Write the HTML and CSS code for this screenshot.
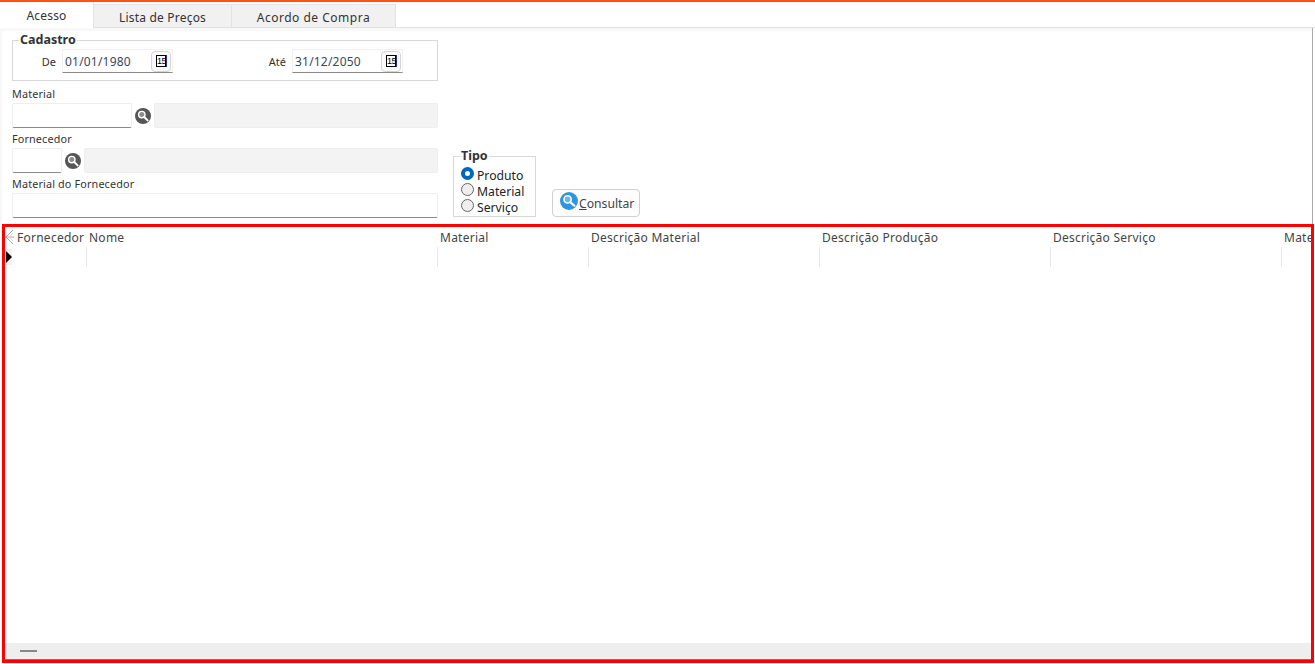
FILE: index.html
```html
<!DOCTYPE html>
<html lang="pt-BR">

<head>
  <meta charset="UTF-8">
  <meta name="viewport" content="width=device-width, initial-scale=1.0">
  <title>Acesso</title>
  <link rel="stylesheet" href="styles.css">
</head>
<body>
  <!-- Tabs -->
  <div class="tabs">
    <div class="tab active">Acesso</div>
    <div class="tab tab-price">Lista de Preços</div>
    <div class="tab tab-buy">Acordo de Compra</div>
  </div>

  <!-- Filters -->
  <div class="panel">
    <div class="filters">
      <div class="filters-left">
        <fieldset class="group cadastro">
          <legend>Cadastro</legend>
          <span class="date-label label-de">De</span>
          <div class="date-input"><span>01/01/1980</span><button class="cal"><b>15</b></button></div>
          <span class="date-label label-ate">Até</span>
          <div class="date-input"><span>31/12/2050</span><button class="cal"><b>15</b></button></div>
        </fieldset>

        <label class="field-label label-material">Material</label>
        <div class="lookup">
          <div class="input input-material"></div>
          <svg class="search" viewBox="0 0 16 16"><circle cx="8" cy="8" r="8" fill="#565656"/><circle cx="6.8" cy="6.6" r="3.2" fill="#8c8c8c" stroke="#fff" stroke-width="1.4"/><path d="M9.2 9l3.4 3.4" stroke="#fff" stroke-width="2" stroke-linecap="round"/></svg>
          <div class="input readonly"></div>
        </div>

        <label class="field-label">Fornecedor</label>
        <div class="lookup">
          <div class="input input-fornecedor"></div>
          <svg class="search" viewBox="0 0 16 16"><circle cx="8" cy="8" r="8" fill="#565656"/><circle cx="6.8" cy="6.6" r="3.2" fill="#8c8c8c" stroke="#fff" stroke-width="1.4"/><path d="M9.2 9l3.4 3.4" stroke="#fff" stroke-width="2" stroke-linecap="round"/></svg>
          <div class="input readonly"></div>
        </div>

        <label class="field-label">Material do Fornecedor</label>
        <div class="input input-full"></div>
      </div>

      <fieldset class="group tipo">
        <legend>Tipo</legend>
        <div class="radio"><span class="dot checked"></span>Produto</div>
        <div class="radio"><span class="dot"></span>Material</div>
        <div class="radio"><span class="dot"></span>Serviço</div>
      </fieldset>

      <button class="consultar">
        <svg viewBox="0 0 18 18"><circle cx="9" cy="9" r="9" fill="#2f95dc"/><circle cx="7.6" cy="7.4" r="3.6" fill="#6db6e8" stroke="#fff" stroke-width="1.6"/><path d="M10.4 10.2l4 3.6" stroke="#fff" stroke-width="2.2" stroke-linecap="round"/></svg>
        <span><u>C</u>onsultar</span>
      </button>
    </div>
  </div>

  <!-- Grid -->
  <div class="grid-frame">
    <div class="grid-body">
      <div class="grid-row grid-head">
        <div class="marker">
          <svg viewBox="0 0 9 16" width="9" height="16"><path d="M8 1L1 8L8 15M0 8H9" fill="none" stroke="#aaa" stroke-width="1"/><path d="M8 4L4 8L8 12" fill="none" stroke="#ddd" stroke-width="1"/></svg>
        </div>
        <div class="col">Fornecedor</div>
        <div class="col">Nome</div>
        <div class="col">Material</div>
        <div class="col">Descrição Material</div>
        <div class="col">Descrição Produção</div>
        <div class="col">Descrição Serviço</div>
        <div class="col">Material</div>
      </div>
      <div class="grid-row grid-filter">
        <div class="marker"><span class="arrow"></span></div>
        <div class="col"></div>
        <div class="col"></div>
        <div class="col"></div>
        <div class="col"></div>
        <div class="col"></div>
        <div class="col"></div>
        <div class="col"></div>
      </div>
    </div>
    <div class="scrollbar"><span class="thumb"></span></div>
  </div>
</body>

</html>
```
FILE: styles.css
```css
body {
  margin: 0;
  padding: 0;
  background: #fff;
  color: #333;
  font-family: "Noto Sans", "Open Sans", sans-serif;
  font-size: 12px;
  overflow: hidden;
}

/* Tabs */
.tabs {
  display: flex;
  height: 25px;
  border-top: 2px solid #ff5210;
  border-bottom: 1px solid #e1e1e1;
}

.tab {
  margin-top: 2px;
  box-sizing: border-box;
  background: #f1f1f1;
  border: 1px solid #e4e4e4;
  border-bottom: none;
  text-align: center;
  line-height: 25px;
  font-size: 12px;
  letter-spacing: 0.2px;
}

.tab.active {
  width: 94px;
  margin-top: 0;
  margin-bottom: -1px;
  background: #fff;
  border: none;
  border-right: 1px solid #e4e4e4;
  line-height: 27px;
}

.tab-price {
  width: 138px;
  border-left: none;
}

.tab-buy {
  width: 164px;
  border-left: none;
  letter-spacing: 0.5px;
}

/* Filter panel */
.panel {
  height: 196px;
  margin-right: 2px;
  padding: 3px 0 0 10px;
  box-sizing: border-box;
  background: linear-gradient(#f8f8f8 0, #f8f8f8 3px, #fff 3px);
  border-left: 2px solid #f8f8f8;
  border-right: 1px solid #aaa;
}

.filters {
  display: flex;
  align-items: flex-end;
  height: 187px;
}

.filters-left {
  width: 426px;
}

.group {
  margin: 0;
  padding: 0;
  border: 1px solid #d8d8d8;
  box-sizing: border-box;
}

.group legend {
  margin-left: 6px;
  padding: 0 1px;
  font-size: 12.5px;
  font-weight: 700;
  line-height: 12px;
}

.cadastro {
  display: flex;
  align-items: center;
  height: 47px;
  padding-bottom: 4px;
}

.date-label {
  font-size: 11px;
  text-align: right;
}

.label-de {
  width: 43px;
  margin-right: 6px;
}

.label-ate {
  width: 113px;
  margin-right: 6px;
}

.date-input {
  display: flex;
  justify-content: space-between;
  align-items: center;
  width: 111px;
  height: 24px;
  padding: 0 1px 0 2px;
  box-sizing: border-box;
  border: 1px solid #f0f0f0;
  border-bottom: 1px solid #8a8a8a;
  font-size: 12px;
  letter-spacing: 0.2px;
  color: #3c4658;
}

.cal {
  display: flex;
  align-items: center;
  justify-content: center;
  width: 20px;
  height: 21px;
  padding: 0;
  background: #fafafa;
  border: 1px solid #d4d4d4;
  border-radius: 4px;
}

.cal b {
  width: 10px;
  height: 12px;
  box-sizing: border-box;
  background: #fff;
  border-top: 1px solid #000;
  border-bottom: 1px solid #000;
  border-left: 1px solid #000;
  border-right: 1px solid #000;
  box-shadow: 1px 0 0 #2b2b9a;
  color: #000;
  font-family: "Liberation Sans", sans-serif;
  font-size: 9px;
  font-weight: 400;
  line-height: 10px;
  letter-spacing: -0.6px;
  text-align: center;
}

.field-label {
  display: block;
  height: 16px;
  font-size: 10.8px;
  line-height: 14px;
  letter-spacing: 0.15px;
}

.label-material {
  margin-top: 6px;
}

.lookup {
  display: flex;
  align-items: center;
  margin-bottom: 4px;
}

.input {
  height: 25px;
  box-sizing: border-box;
  background: #fff;
  border: 1px solid #eee;
  border-bottom: 1px solid #8a8a8a;
  border-radius: 2px;
}

.input-material {
  width: 120px;
}

.input-fornecedor {
  width: 50px;
}

.input-full {
  width: 426px;
}

.readonly {
  flex: 1;
  background: #f3f3f3;
  border-bottom-color: #eee;
}

.search {
  width: 16px;
  height: 16px;
  margin: 0 3px;
  flex: none;
}

/* Tipo */
.tipo {
  width: 83px;
  height: 67px;
  margin: 0 0 1px 15px;
  padding: 5px 0 0 7px;
}

.tipo legend {
  margin-left: -1px;
}

.radio {
  display: flex;
  align-items: center;
  height: 16px;
  font-size: 12.2px;
  color: #222;
}

.dot {
  width: 13px;
  height: 13px;
  margin: 0 3px 4px 0;
  box-sizing: border-box;
  background: #eee;
  border: 1px solid #666;
  border-radius: 50%;
}

.dot.checked {
  background: #fff;
  border: 4px solid #0067c0;
}

/* Button */
.consultar {
  display: flex;
  align-items: center;
  width: 88px;
  height: 28px;
  margin: 0 0 1px 16px;
  padding: 0 0 0 7px;
  background: #fdfdfd;
  border: 1px solid #d0d0d0;
  border-radius: 4px;
  font-family: inherit;
  font-size: 12.2px;
  color: #444;
}

.consultar span {
  margin-top: 1px;
}

.consultar svg {
  width: 18px;
  height: 18px;
  margin-top: -4px;
  margin-right: 1px;
  flex: none;
}

/* Grid */
.grid-frame {
  display: flex;
  flex-direction: column;
  height: 439px;
  margin: 0 1px 0 2px;
  box-sizing: border-box;
  border: 3px solid #fe0000;
  overflow: hidden;
}

.grid-body {
  flex: 1;
  overflow: hidden;
}

.grid-row {
  display: grid;
  grid-template-columns: 10px 72px 351px 151px 231px 231px 231px 231px;
}

.grid-head {
  height: 20px;
  color: #444;
  font-size: 12px;
  line-height: 22px;
  letter-spacing: 0.25px;
}

.grid-head .col {
  padding-left: 2px;
  white-space: nowrap;
}

.grid-filter {
  height: 20px;
}

.grid-filter .col {
  border-left: 1px solid #e8e8e8;
  margin-left: -1px;
}

.grid-filter .marker + .col {
  border-left: none;
}

.marker svg {
  display: block;
  margin-top: 2px;
}

.marker {
  overflow: hidden;
}

.grid-filter .marker {
  width: 7px;
  background: #f0f0f0;
  height: 16px;
  margin-top: 2px;
}

.arrow {
  display: block;
  width: 0;
  height: 0;
  margin: 2px 0 0 1px;
  border-left: 6px solid #000;
  border-top: 6px solid transparent;
  border-bottom: 6px solid transparent;
}

.scrollbar {
  height: 17px;
  box-sizing: border-box;
  background: #eee;
  border-bottom: 1px solid #777;
  position: relative;
  flex: none;
}

.thumb {
  position: absolute;
  left: 15px;
  top: 7px;
  width: 17px;
  height: 2px;
  background: #888;
}
```
